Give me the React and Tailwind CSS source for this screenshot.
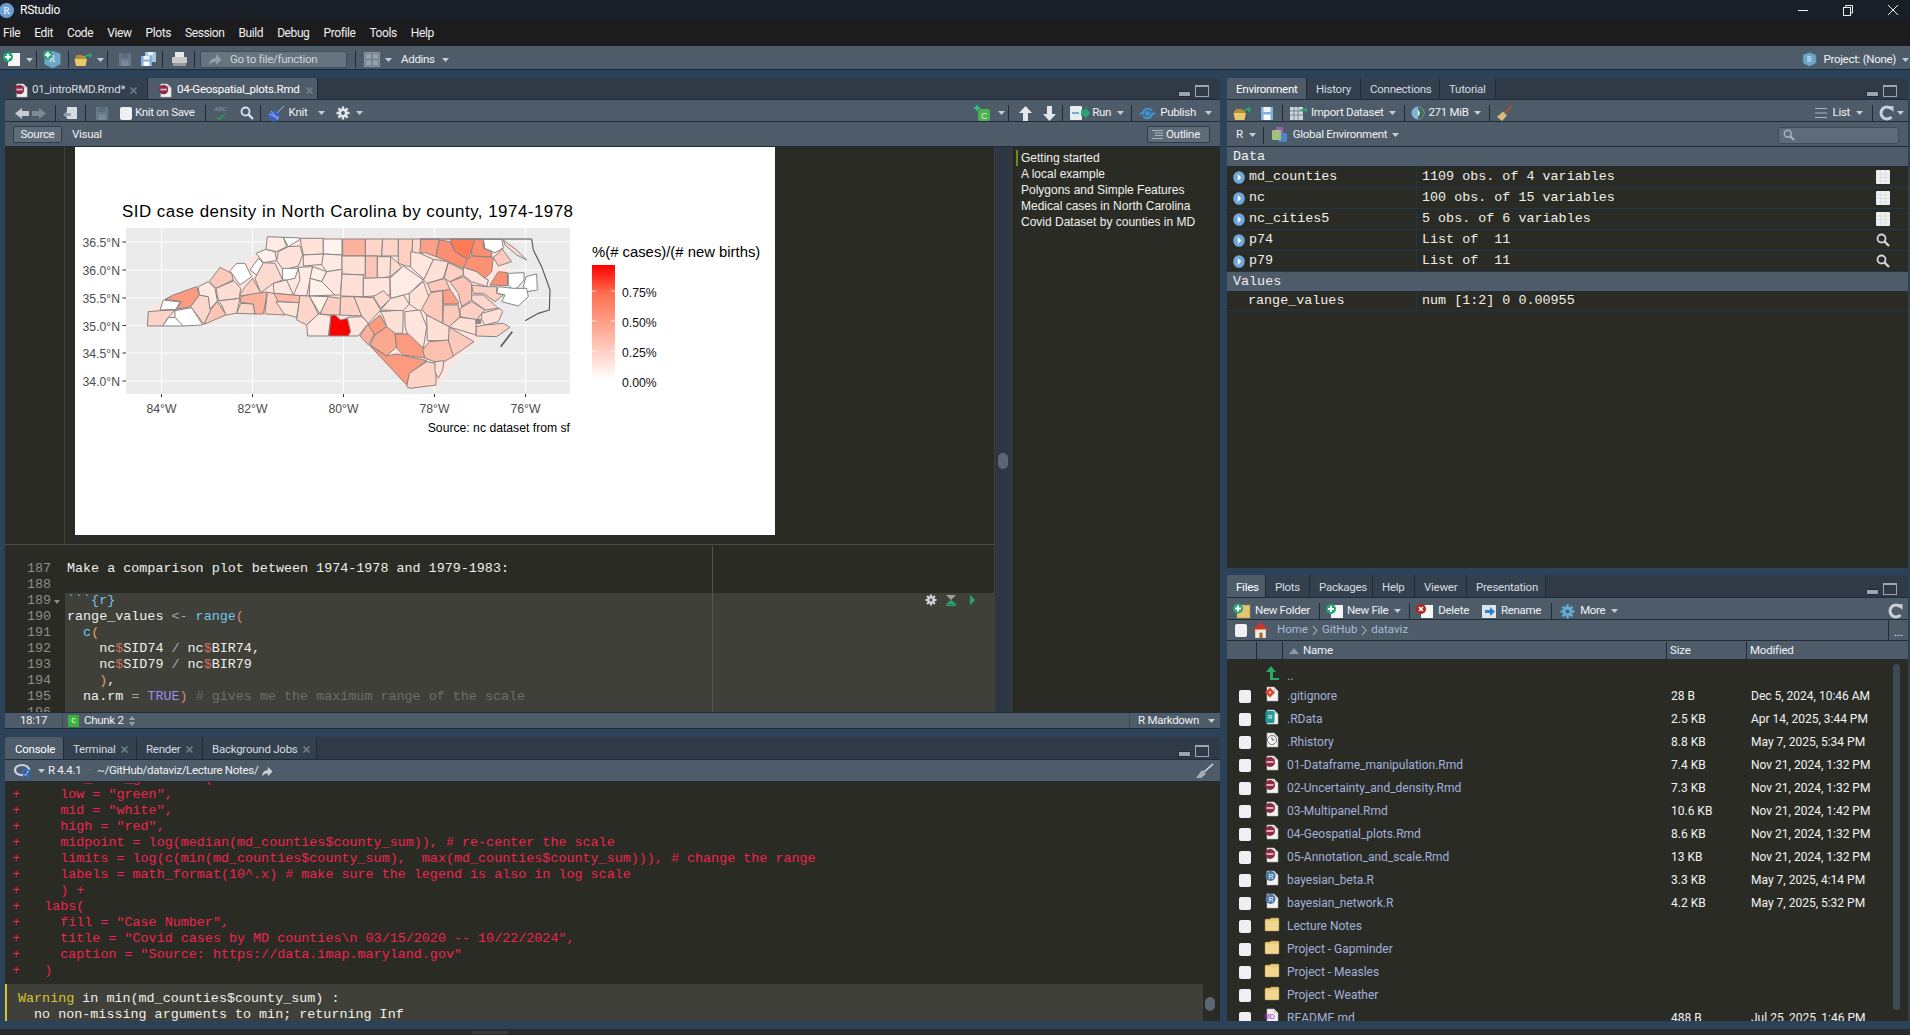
import React from "react";

const Caret = ({ className = "" }) => (
  <svg width="7" height="4" viewBox="0 0 7 4" className={"shrink-0 " + className}><path d="M0 0H7L3.5 4Z" fill="#c5ccd3" /></svg>
);
const Sep = ({ className = "" }) => <div className={"w-px h-[17px] bg-[#1d2a38] shrink-0 " + className} />;

const Doc = ({ children, size = 16 }) => (
  <svg width={size} height={size} viewBox="0 0 16 16" className="shrink-0">
    <path d="M3 1H10L14 5V15H3Z" fill="#f2f2f2" stroke="#b5b5b5" strokeWidth=".6" />
    <path d="M10 1V5H14" fill="#cfcfcf" />
    {children}
  </svg>
);
const RmdDoc = ({ size }) => (
  <Doc size={size}><circle cx="6" cy="7" r="5" fill="#8b2a45" /><rect x="2.5" y="6" width="7" height="2" fill="#d9a9b6" /></Doc>
);
const RDoc = () => (
  <Doc><circle cx="6.5" cy="6" r="5" fill="#4b77a9" /><text x="4.4" y="8.5" fontSize="7" fill="#fff" fontFamily="Liberation Sans">R</text></Doc>
);
const GitDoc = () => (
  <Doc><path d="M6 1.5L11 6.5 6 11.5 1 6.5Z" fill="#d9472b" /><circle cx="6" cy="6.5" r="1" fill="#fff" /></Doc>
);
const DataDoc = () => (
  <Doc><rect x="1.5" y="2" width="9" height="12" rx="1.5" fill="#1f9a94" /><text x="4" y="10" fontSize="6" fill="#fff" fontFamily="Liberation Sans">R</text></Doc>
);
const HistDoc = () => (
  <Doc><circle cx="8" cy="8" r="4.5" fill="#fff" stroke="#777" /><path d="M8 5V8H10.5" stroke="#555" fill="none" /></Doc>
);
const MdDoc = () => (
  <Doc><text x="0" y="11" fontSize="7" fill="#a020c0" fontFamily="Liberation Sans">MD</text></Doc>
);
const Folder = () => (
  <svg width="16" height="15" viewBox="0 0 16 15" className="shrink-0">
    <path d="M1 3Q1 2 2 2H6L7 1H14Q15 1 15 2V13Q15 14 14 14H2Q1 14 1 13Z" fill="#e8c974" stroke="#9c8544" strokeWidth=".5" />
    <rect x="1.5" y="4" width="13" height="9.5" fill="#f0d68e" />
  </svg>
);
const UpArrow = () => (
  <svg width="16" height="16" viewBox="0 0 16 16" className="shrink-0"><path d="M7 1L12 7H9V13H15V15H6V7H2Z" fill="#2aa868" /></svg>
);
const FolderOpen = () => (
  <svg width="19" height="15" viewBox="0 0 19 15" className="shrink-0">
    <path d="M1 6L3 3H8L9 4H12V12H2Z" fill="#b48f3f" />
    <path d="M0.5 7H13L11.5 14H2Z" fill="#ecc968" />
    <path d="M10 5Q12 1.5 15 2.5V0.5L18.5 3.5 15 6.5V4.5Q12.5 4 10 5Z" fill="#2aa868" />
  </svg>
);
const Floppy = ({ dim, blue }) => (
  <svg width="14" height="15" viewBox="0 0 14 15" className="shrink-0">
    <path d="M1 1H13V14H1Z" fill={dim ? "#66788a" : blue ? "#7fb0e0" : "#8296aa"} />
    <rect x="3.5" y="1" width="7" height="5" fill={dim ? "#5a6a7a" : "#eef3f8"} />
    <rect x="3.5" y="8.5" width="7" height="5.5" fill={dim ? "#7a8a98" : "#f7f9fb"} />
  </svg>
);
const SaveAll = () => (
  <svg width="17" height="16" viewBox="0 0 17 16" className="shrink-0">
    <path d="M5 1H16V11H5Z" fill="#a9c5e2" /><rect x="8" y="1" width="5" height="3" fill="#eef3f8" />
    <path d="M1 5H12V15H1Z" fill="#7fb0e0" /><rect x="3.5" y="5" width="6" height="3.5" fill="#eef3f8" /><rect x="3.5" y="10.5" width="6" height="4.5" fill="#fff" />
  </svg>
);
const Printer = () => (
  <svg width="17" height="16" viewBox="0 0 17 16" className="shrink-0">
    <rect x="4" y="1" width="9" height="6" fill="#e8e8e8" /><path d="M1 7Q1 6 2 6H15Q16 6 16 7V12H1Z" fill="#c9c9c9" /><rect x="2" y="12" width="13" height="3" fill="#9a9a9a" />
  </svg>
);
const Cube = ({ size = 16, plus }) => (
  <svg width={size} height={size} viewBox="0 0 16 16" className="shrink-0">
    <path d="M8 .5L15 3V12L8 15.5 1 12V3Z" fill="#6fa6c6" stroke="#3f7391" strokeWidth=".6" />
    <text x="5" y="10.5" fontSize="8" fill="#ddeeff" fontFamily="Liberation Serif">R</text>
    {plus && <g><circle cx="4" cy="4" r="4" fill="#27a572" /><path d="M4 1.7V6.3M1.7 4H6.3" stroke="#fff" strokeWidth="1.6" /></g>}
  </svg>
);
const NewDoc = () => (
  <svg width="18" height="16" viewBox="0 0 18 16" className="shrink-0">
    <path d="M5 2H17V15H5Z" fill="#f5f5f5" /><circle cx="5" cy="6" r="5" fill="#27a572" /><path d="M5 3V9M2 6H8" stroke="#fff" strokeWidth="2" />
  </svg>
);
const NewFolder = () => (
  <svg width="18" height="16" viewBox="0 0 18 16" className="shrink-0">
    <path d="M4 2H17V15H4Z" fill="#e3c46f" stroke="#a88a40" strokeWidth=".5" /><circle cx="5" cy="5.5" r="5" fill="#27a572" /><path d="M5 2.5V8.5M2 5.5H8" stroke="#fff" strokeWidth="2" />
  </svg>
);
const GridIcon = () => (
  <svg width="16" height="15" viewBox="0 0 16 15" className="shrink-0">
    <rect x=".5" y=".5" width="15" height="14" fill="#76838f" stroke="#8a96a1" />
    <rect x="2" y="2" width="5" height="4.5" fill="#97a2ac" /><rect x="9" y="2" width="5" height="4.5" fill="#97a2ac" />
    <rect x="2" y="8.5" width="5" height="4.5" fill="#97a2ac" /><rect x="9" y="8.5" width="5" height="4.5" fill="#97a2ac" />
  </svg>
);
const Gear = ({ size = 14, color = "#e4e7ea" }) => (
  <svg width={size} height={size} viewBox="0 0 14 14" className="shrink-0">
    <g stroke={color} strokeWidth="2.4"><path d="M7 .5V13.5M.5 7H13.5M2.4 2.4L11.6 11.6M11.6 2.4L2.4 11.6" /></g>
    <circle cx="7" cy="7" r="4.4" fill={color} /><circle cx="7" cy="7" r="1.9" fill="#4e5c6a" />
  </svg>
);
const Lens = ({ color = "#cfd6dc", size = 14 }) => (
  <svg width={size} height={size} viewBox="0 0 14 14" className="shrink-0">
    <circle cx="5.5" cy="5.5" r="4" fill="none" stroke={color} strokeWidth="1.8" /><path d="M8.5 8.5L13 13" stroke={color} strokeWidth="2.4" />
  </svg>
);
const Refresh = () => (
  <svg width="15" height="16" viewBox="0 0 15 16" className="shrink-0">
    <path d="M12.5 4A6 6 0 1 0 12.5 12" fill="none" stroke="#c9d0d6" strokeWidth="3" /><path d="M9 1.5L14.5 1V7Z" fill="#c9d0d6" />
  </svg>
);
const MinMax = () => (
  <div className="flex items-end gap-[4px] mr-[11px] mb-[2px]">
    <div className="w-[13px] h-[6px] bg-[#9aa5af] border border-[#1f2a35] rounded-[1px]" />
    <div className="w-[14px] h-[12px] border border-[#9aa5af] border-t-[2px]" />
  </div>
);
const Broom = ({ size = 17 }) => (
  <svg width={size} height={size} viewBox="0 0 17 17" className="shrink-0">
    <path d="M15.5 .5L9 8" stroke="#b5552b" strokeWidth="1.6" /><path d="M7 6.5L11 10.5 6 16 1 12Z" fill="#d8bb77" />
  </svg>
);
const Close = () => (
  <svg width="7" height="7" viewBox="0 0 7 7" className="shrink-0"><path d="M.5 .5L6.500 6.500M6.500 .5L.5 6.500" stroke="#75818d" strokeWidth="1.5" /></svg>
);
const Blue = () => (
  <svg width="12" height="13" viewBox="0 0 12 13" className="shrink-0"><ellipse cx="6" cy="6.500" rx="5.800" ry="6.300" fill="#6fa8dc" /><path d="M4.800 3L8.200 6.500 4.800 10Z" fill="#fff" /></svg>
);
const Chev = () => (
  <svg width="6" height="11" viewBox="0 0 6 11" className="mx-[4px] shrink-0"><path d="M1 1L5 5.500 1 10" fill="none" stroke="#c5ccd3" /></svg>
);

const Tab = ({ w, active, pl = 9, children }) => (
  <div
    className={
      "flex items-center h-full pt-[3px] rounded-t-[2px] border-r border-[#1f2a35] text-[11.5px] tracking-[-0.25px] whitespace-nowrap shrink-0 " +
      (active ? "bg-[#4e5c6a] text-white" : "bg-[#33404d] text-[#d5dbe0]")
    }
    style={{ width: w, paddingLeft: pl }}
  >
    {children}
  </div>
);

const COUNTIES_W = [
  ["#fdd3c7", "52,288 55,245 90,242 135,240 115,262 98,288"],
  ["#fff", "98,288 115,263 135,262 160,285 160,288"],
  ["#fff", "135,262 135,242 185,233 218,285 160,288"],
  ["#fff", "90,240 100,210 150,216 138,238"],
  ["#fc9a80", "105,208 130,195 200,170 208,195 182,230 140,238 155,215"],
  ["#fdd6cb", "182,230 208,195 235,200 243,238 222,283"],
  ["#ffe9e2", "205,170 235,155 255,175 262,212 240,238 235,200 208,195"],
  ["#fdc5b5", "222,283 243,238 262,215 288,255"],
  ["#fddcd2", "265,212 330,205 320,250 288,255 275,225"],
  ["#fdc9ba", "238,155 270,112 305,130 310,150 258,175"],
  ["#fddcd2", "258,175 312,152 332,175 328,205 265,212"],
  ["#fff", "300,122 320,100 345,100 365,140 330,165"],
  ["#fff", "360,120 385,85 400,100 380,135"],
  ["#fdd6cb", "320,250 332,220 370,222 375,252"],
  ["#fdb09a", "332,200 370,190 412,186 400,252 375,252 370,222 332,217"],
  ["#fdd0c3", "330,195 345,170 368,145 392,188 332,198"],
  ["#fff0eb", "378,70 408,58 435,65 440,92 400,98"],
  ["#ffebe4", "408,58 412,20 460,22 470,50 440,65"],
  ["#fff", "460,22 510,24 510,28 475,50"],
  ["#ffe3da", "440,92 445,65 475,50 510,48 518,75 505,108 460,120"],
  ["#fee1d7", "510,25 580,25 580,72 520,75"],
  ["#fff3ef", "580,27 636,27 636,75 580,72"],
  ["#fdb29e", "638,27 706,27 706,78 638,78"],
  ["#fdd4c8", "706,27 758,27 755,78 706,78"],
  ["#fdd4c8", "758,27 805,27 805,78 755,78"],
  ["#fdd0c2", "805,27 848,27 845,110 830,108 805,100"],
  ["#ffd7cb", "848,27 875,27 875,82 845,100"],
  ["#ffe8e1", "520,75 580,72 580,103 520,108"],
  ["#ffe9e3", "580,72 636,75 636,118 590,125 575,105"],
  ["#fee0d6", "636,78 706,78 706,135 636,132"],
  ["#fdc5b5", "706,78 742,78 742,145 706,145"],
  ["#fee0d6", "742,80 782,80 782,140 742,145"],
  ["#fddacf", "782,80 805,100 815,112 780,140"],
  ["#fddacf", "400,98 435,100 458,150 430,160 392,188 375,145"],
  ["#fff", "458,115 505,115 495,145 470,150 458,150"],
  ["#ffeae4", "505,112 548,110 538,160 530,198 490,195 510,150"],
  ["#fff0eb", "548,110 590,125 575,155 540,145"],
  ["#fff0eb", "540,145 575,155 615,195 538,198"],
  ["#ffe5dd", "590,125 636,118 632,195 615,195 575,155"],
  ["#fee0d6", "636,132 700,135 700,200 632,198"],
  ["#ffe5dd", "700,145 780,142 780,195 700,200"],
  ["#ffe7e0", "430,160 470,150 490,195 432,190"],
  ["#fdb9a5", "432,190 510,197 508,218 438,215"],
  ["#fed3c6", "412,187 432,190 465,255 405,252"],
  ["#fee5dc", "438,215 508,218 500,262 462,252"],
  ["#fed5c9", "510,197 538,198 565,252 530,285 500,270"],
  ["#fff0eb", "538,198 595,200 570,252"],
  ["#fdcfc2", "595,200 632,205 630,255 603,255 570,252"],
  ["#fdd2c5", "632,200 672,200 695,258 630,255"],
  ["#fed9cd", "672,200 730,203 752,240 715,280 695,258"],
  ["#fed9cd", "730,200 760,182 782,205 752,235"],
  ["#ffe9e2", "530,285 565,252 603,256 595,318 533,318"],
  ["#ff0000", "603,256 615,255 632,270 652,265 662,305 655,318 597,318"],
  ["#ffe5dd", "652,262 695,260 715,280 685,318 655,318 662,305"],
  ["#fcb09b", "715,280 730,300 732,315 715,345 690,318"],
  ["#fc9a80", "715,285 750,255 770,290 735,315"],
  ["#fee0d6", "750,245 820,240 818,310 790,310 770,290 758,255"],
  ["#ffe3da", "752,240 782,205 820,195 838,222 820,242"],
  ["#ffeae4", "780,145 820,108 880,150 838,190 820,195 782,205"],
  ["#fee2d8", "838,190 880,155 900,210 870,245 838,222"],
  ["#ffe5dd", "825,245 870,240 890,290 880,355 835,320 825,290"],
  ["#fca88f", "735,315 770,290 795,310 800,350 770,378 720,345"],
  ["#fc9a80", "795,312 835,312 880,355 890,385 820,375 800,355"],
  ["#fc9a80", "770,378 800,372 890,392 840,430 830,465 718,345"],
  ["#fed3c6", "830,470 838,430 890,395 918,400 918,465 840,475"],
];
const COUNTIES_E = [
  ["#fc9f86", "152,27 208,27 198,80 165,68 150,70"],
  ["#fc8f72", "208,30 240,35 255,65 295,90 280,115 235,95 198,80"],
  ["#ff7a55", "240,27 315,27 305,60 295,88 255,65"],
  ["#fc8f72", "315,27 340,27 340,55 365,65 365,80 305,78 305,60"],
  ["#fc9272", "292,88 305,78 370,82 365,125 345,145 320,125 280,112"],
  ["#fff", "340,28 395,28 400,55 375,68 345,55"],
  ["#fdcbbd", "370,82 385,70 395,55 425,95 385,108"],
  ["#ffd7cb", "400,30 440,60 470,90 440,75 405,45"],
  ["#ffe3da", "280,112 320,125 345,145 355,150 350,170 320,160 305,155 280,135"],
  ["#fc8f72", "360,165 385,125 412,128 412,167"],
  ["#fff", "415,130 462,128 462,150 445,170 430,180 415,165"],
  ["#fff", "468,140 500,132 502,180 470,185 460,170"],
  ["#fff", "385,170 430,175 470,175 475,200 445,228 395,215 405,195 380,190"],
  ["#fdc5b5", "240,155 280,140 305,160 305,210 275,230 265,190"],
  ["#fdcfc2", "305,165 350,170 380,170 380,190 400,195 375,215 340,190 310,190"],
  ["#fdd6cb", "305,195 340,195 385,235 345,240 305,210"],
  ["#fdd0c3", "270,235 305,215 345,240 335,250 320,270 270,260"],
  ["#fee0d6", "335,250 390,235 398,245 385,275 345,285 335,270"],
  ["#fed3c6", "318,290 345,285 400,280 420,292 380,320 318,318"],
  ["#fee0d6", "270,262 318,268 318,315 235,290"],
  ["#fdc9ba", "220,225 265,225 270,260 238,290 218,280"],
  ["#fc9f86", "218,180 240,178 265,215 265,222 220,222"],
  ["#fdc9ba", "172,160 225,145 240,178 218,182 182,185"],
  ["#fee0d6", "160,150 190,88 235,95 220,145 172,160"],
  ["#fdd0c3", "222,145 235,98 280,120 280,135 240,155"],
  ["#fdc9ba", "155,238 182,188 218,182 218,280 170,255"],
  ["#fee0d6", "170,255 218,280 238,290 238,332 172,332"],
  ["#fdc0ae", "178,335 235,330 252,378 222,395 195,395 165,385 158,360"],
  ["#fdc9ba", "238,292 312,335 250,378 235,330"],
  ["#fee0d6", "195,395 222,392 218,420 205,445 195,425"],
  ["#ffe5dd", "122,65 150,70 190,88 162,148 122,112"],
];

const Map = () => (
  <svg width="700" height="388" viewBox="75 147 700 388" className="block shrink-0" style={{ fontFamily: "'Liberation Sans',sans-serif" }}>
    <defs>
      <linearGradient id="lg" x1="0" y1="0" x2="0" y2="1">
        <stop offset="0" stopColor="#ff0000" />
        <stop offset=".25" stopColor="#ff6f50" />
        <stop offset=".5" stopColor="#fd9f88" />
        <stop offset=".75" stopColor="#ffcfc3" />
        <stop offset="1" stopColor="#ffffff" />
      </linearGradient>
    </defs>
    <rect x="75" y="147" width="700" height="388" fill="#fff" />
    <text x="122" y="217" fontSize="16.9" fill="#000" textLength="451">SID case density in North Carolina by county, 1974-1978</text>
    <rect x="126" y="228" width="444" height="166" fill="#ebebeb" />
    {[161.5, 252.5, 343.5, 434.5, 525.5].map((x) => (
      <g key={x}>
        <line x1={x} x2={x} y1="228" y2="394" stroke="#fff" strokeWidth="1.1" />
        <line x1={x} x2={x} y1="394" y2="397" stroke="#333" strokeWidth="1" />
      </g>
    ))}
    {[242, 270, 298, 325.5, 353, 381].map((y) => (
      <g key={y}>
        <line x1="126" x2="570" y1={y} y2={y} stroke="#fff" strokeWidth="1.1" />
        <line x1="122.5" x2="126" y1={y} y2={y} stroke="#333" strokeWidth="1" />
      </g>
    ))}
    <g transform="translate(130 230) scale(.33333)" stroke="#858585" strokeWidth="3" strokeLinejoin="round">
      <polygon fill="#ffe5dd" stroke="none" points="52,288 55,245 100,210 200,168 238,155 270,112 345,97 378,70 408,58 412,20 1060,27 1120,60 1130,125 1110,165 1090,210 1060,215 1090,235 1120,240 1100,290 1040,335 970,395 925,470 835,475 685,318 533,318 500,262 330,252 220,285" />
      {COUNTIES_W.map(([f, p], i) => <polygon key={i} fill={f} points={p} />)}
    </g>
    <g transform="translate(370 230) scale(.33333)" stroke="#858585" strokeWidth="3" strokeLinejoin="round">
      {COUNTIES_E.map(([f, p], i) => <polygon key={i} fill={f} points={p} />)}
      <polyline fill="none" stroke="#595959" strokeWidth="3.5" points="485,27 490,60 515,110 540,180 538,240 505,250 465,272" />
      <polyline fill="none" stroke="#595959" strokeWidth="5" points="392,350 427,305" />
      <line x1="152" x2="485" y1="27" y2="27" strokeWidth="4.500" />
      <rect x="318" y="268" width="14" height="12" fill="#8a8a8a" />
    </g>
    {[["36.5°N", 242], ["36.0°N", 270], ["35.5°N", 298], ["35.0°N", 326], ["34.5°N", 353], ["34.0°N", 381]].map(([t, y]) => (
      <text key={t} x="120" y={y + 4.5} fontSize="12.2" textAnchor="end" fill="#4d4d4d">{t}</text>
    ))}
    {[["84°W", 161.5], ["82°W", 252.5], ["80°W", 343.5], ["78°W", 434.5], ["76°W", 525.5]].map(([t, x]) => (
      <text key={t} x={x} y="413" fontSize="12.2" textAnchor="middle" fill="#4d4d4d">{t}</text>
    ))}
    <text x="570" y="431.5" fontSize="12.2" textAnchor="end" fill="#000">Source: nc dataset from sf</text>
    <text x="592" y="257" fontSize="14.85" fill="#000">%(# cases)/(# new births)</text>
    <rect x="592" y="265" width="23" height="115" fill="url(#lg)" />
    {[291, 321, 351].map((y) => (
      <g key={y} stroke="#fff" strokeWidth="1" opacity=".8">
        <line x1="592" x2="596.5" y1={y} y2={y} /><line x1="610.5" x2="615" y1={y} y2={y} />
      </g>
    ))}
    {[["0.75%", 292], ["0.50%", 322], ["0.25%", 352], ["0.00%", 382]].map(([t, y]) => (
      <text key={t} x="622" y={y + 4.5} fontSize="12.2" fill="#111">{t}</text>
    ))}
  </svg>
);

const L = ({ c, children }) => <span style={{ color: c }}>{children}</span>;
const CY = "#74c6e6", GR = "#a9aba3", PK = "#e58080", OR = "#dca35a", DL = "#cf6a60";
const CODE = [
  [187, 0, <>Make a comparison plot between 1974-1978 and 1979-1983:</>],
  [188, 0, ""],
  [189, 1, <L c={CY}>{"```{r}"}</L>],
  [190, 1, <>range_values <L c={GR}>&lt;-</L> <L c={CY}>range</L><L c={PK}>(</L></>],
  [191, 1, <>{"  "}<L c={CY}>c</L><L c={OR}>(</L></>],
  [192, 1, <>{"    "}nc<L c={DL}>$</L>SID74 <L c={GR}>/</L> nc<L c={DL}>$</L>BIR74,</>],
  [193, 1, <>{"    "}nc<L c={DL}>$</L>SID79 <L c={GR}>/</L> nc<L c={DL}>$</L>BIR79</>],
  [194, 1, <>{"    "}<L c={OR}>)</L>,</>],
  [195, 1, <>{"  "}na.rm <L c={GR}>=</L> <L c="#9a8cf0">TRUE</L><L c={PK}>)</L> <L c="#6e6f65"># gives me the maximum range of the scale</L></>],
  [196, 1, ""],
];

const CONSOLE = [
  "+   scale_fill_gradient2(",
  '+     low = "green",',
  '+     mid = "white",',
  '+     high = "red",',
  "+     midpoint = log(median(md_counties$county_sum)), # re-center the scale",
  "+     limits = log(c(min(md_counties$county_sum),  max(md_counties$county_sum))), # change the range",
  "+     labels = math_format(10^.x) # make sure the legend is also in log scale",
  "+     ) +",
  "+   labs(",
  '+     fill = "Case Number",',
  '+     title = "Covid cases by MD counties\\n 03/15/2020 -- 10/22/2024",',
  '+     caption = "Source: https://data.imap.maryland.gov"',
  "+   )",
];

const ENV = [
  ["md_counties", "1109 obs. of 4 variables", "t"],
  ["nc", "100 obs. of 15 variables", "t"],
  ["nc_cities5", "5 obs. of 6 variables", "t"],
  ["p74", "List of  11", "s"],
  ["p79", "List of  11", "s"],
];

const FILES = [
  [GitDoc, ".gitignore", "28 B", "Dec 5, 2024, 10:46 AM"],
  [DataDoc, ".RData", "2.5 KB", "Apr 14, 2025, 3:44 PM"],
  [HistDoc, ".Rhistory", "8.8 KB", "May 7, 2025, 5:34 PM"],
  [RmdDoc, "01-Dataframe_manipulation.Rmd", "7.4 KB", "Nov 21, 2024, 1:32 PM"],
  [RmdDoc, "02-Uncertainty_and_density.Rmd", "7.3 KB", "Nov 21, 2024, 1:32 PM"],
  [RmdDoc, "03-Multipanel.Rmd", "10.6 KB", "Nov 21, 2024, 1:42 PM"],
  [RmdDoc, "04-Geospatial_plots.Rmd", "8.6 KB", "Nov 21, 2024, 1:32 PM"],
  [RmdDoc, "05-Annotation_and_scale.Rmd", "13 KB", "Nov 21, 2024, 1:32 PM"],
  [RDoc, "bayesian_beta.R", "3.3 KB", "May 7, 2025, 4:14 PM"],
  [RDoc, "bayesian_network.R", "4.2 KB", "May 7, 2025, 5:32 PM"],
  [Folder, "Lecture Notes", "", ""],
  [Folder, "Project - Gapminder", "", ""],
  [Folder, "Project - Measles", "", ""],
  [Folder, "Project - Weather", "", ""],
  [MdDoc, "README.md", "488 B", "Jul 25, 2025, 1:46 PM"],
];

const CB = ({ className = "" }) => <div className={"w-[12px] h-[13px] bg-[#eef0f1] rounded-[2px] shrink-0 " + className} />;
const BAR = "flex items-center bg-[#4e5c6a] border-b border-[#1d2b3a] shrink-0 text-[11.5px] tracking-[-0.3px] whitespace-nowrap text-[#eef1f3]";
const STRIP = "flex items-stretch justify-between h-[22px] bg-[#2f3a46] border-b border-[#1d2b3a] shrink-0";

export default function App() {
  return (
    <div className="w-[1910px] h-[1035px] overflow-hidden flex flex-col bg-[#2c4259] [font-family:Roboto,sans-serif]">
      {/* title */}
      <div className="h-[20px] bg-[#1a1e27] flex items-center shrink-0 relative">
        <div className="w-[15px] h-[15px] rounded-full bg-[#6a9fd6] ml-[-1px] flex items-center justify-center text-white text-[10px] [font-family:'Liberation_Serif',serif]">R</div>
        <span className="ml-[6px] text-white text-[12px] tracking-[-0.2px]">RStudio</span>
        <div className="ml-auto flex items-center gap-[33px] mr-[11px]">
          <svg width="12" height="12" viewBox="0 0 12 12"><path d="M1 6.5H11" stroke="#eee" /></svg>
          <svg width="12" height="12" viewBox="0 0 12 12" fill="none" stroke="#eee"><rect x="1.5" y="3.5" width="7" height="8" /><path d="M3.5 3V1.5H10.5V9H9" /></svg>
          <svg width="12" height="12" viewBox="0 0 12 12"><path d="M1 1L11 11M11 1L1 11" stroke="#eee" /></svg>
        </div>
      </div>
      {/* menu */}
      <div className="h-[26px] bg-[#1c1c1e] flex items-center pl-[3px] gap-[14px] text-[12px] tracking-[-0.4px] text-[#f0f0f0] shrink-0">
        {["File", "Edit", "Code", "View", "Plots", "Session", "Build", "Debug", "Profile", "Tools", "Help"].map((m) => <span key={m}>{m}</span>)}
      </div>
      {/* main toolbar */}
      <div className="h-[24px] pb-[1px] bg-[#4e5c6a] border-b border-[#1b2a3a] flex items-end text-[11.5px] tracking-[-0.3px] text-[#eef1f3] shrink-0">
        <div className="ml-[3px] self-center mt-[4px]"><NewDoc /></div>
        <Caret className="ml-[5px] self-center mt-[5px]" />
        <Sep className="ml-[3px]" />
        <div className="ml-[6px] self-center mt-[4px]"><Cube plus size={19} /></div>
        <Sep className="ml-[6px]" />
        <div className="ml-[5px] self-center mt-[4px]"><FolderOpen /></div>
        <Caret className="ml-[4px] self-center mt-[5px]" />
        <Sep className="ml-[3px]" />
        <div className="ml-[10px] self-center mt-[4px]"><Floppy dim /></div>
        <div className="ml-[8px] self-center mt-[4px]"><SaveAll /></div>
        <Sep className="ml-[5px]" />
        <div className="ml-[8px] self-center mt-[4px]"><Printer /></div>
        <Sep className="ml-[6px]" />
        <div className="ml-[5px] w-[147px] h-[17px] bg-[#66747f] border border-[#3f4d5a] rounded-[2px] flex items-center pl-[7px] text-[#cdd3d8]">
          <svg width="14" height="13" viewBox="0 0 14 13" className="shrink-0"><path d="M1 12Q2 5 8 5V1L13.5 6.5 8 12V8.5Q4 8.5 1 12Z" fill="#93a0ab" /></svg>
          <span className="ml-[8px]">Go to file/function</span>
        </div>
        <Sep className="ml-[8px]" />
        <div className="ml-[8px] self-center mt-[4px]"><GridIcon /></div>
        <Caret className="ml-[5px] self-center mt-[5px]" />
        <span className="ml-[9px] self-center mt-[5px]">Addins</span>
        <Caret className="ml-[7px] self-center mt-[5px]" />
        <div className="ml-auto flex items-center mr-[1px] self-center mt-[5px]">
          <Cube size={15} />
          <span className="ml-[6px]">Project: (None)</span>
          <Caret className="ml-[6px]" />
        </div>
      </div>
      {/* body */}
      <div className="flex-1 flex pt-[8px] pb-[8px] pl-[5px] min-h-0">
        <div className="w-[1215px] flex flex-col gap-[8px] shrink-0">
          {/* source */}
          <div className="h-[651px] flex flex-col overflow-hidden">
            <div className={STRIP + " rounded-t-[3px]"}>
              <div className="flex items-stretch h-full">
                <Tab w={143}>
                  <RmdDoc size={15} /><span className="ml-[3px]">01_introRMD.Rmd*</span><span className="ml-[5px]"><Close /></span>
                </Tab>
                <Tab w={170} active pl={10}>
                  <RmdDoc size={15} /><span className="ml-[4px]">04-Geospatial_plots.Rmd</span><span className="ml-[6px]"><Close /></span>
                </Tab>
              </div>
              <div className="flex items-end"><MinMax /></div>
            </div>
            <div className={BAR + " h-[22px] pt-[5px]"}>
              <svg width="32" height="13" viewBox="0 0 32 13" className="ml-[10px] shrink-0"><path d="M0 6.5L7 1V4H14V9H7V12Z" fill="#c6ccd2" /><path d="M31 6.5L24 1V4H17V9H24V12Z" fill="#7d8995" /></svg>
              <Sep className="ml-[8px]" />
              <svg width="15" height="14" viewBox="0 0 15 14" className="ml-[7px] shrink-0"><path d="M4 1H14V13H4Z" fill="#d7dce0" /><path d="M0 9L4 5V7H8V10H4V12Z" fill="#8fa0ae" /></svg>
              <Sep className="ml-[7px]" />
              <div className="ml-[9px]"><Floppy dim /></div>
              <CB className="ml-[11px]" />
              <span className="ml-[3px]">Knit on Save</span>
              <Sep className="ml-[10px]" />
              <div className="ml-[6px] w-[18px] flex flex-col items-center leading-none">
                <span className="text-[7px] text-[#8a96a1] [font-family:'Liberation_Serif',serif]">ABC</span>
                <svg width="10" height="7" viewBox="0 0 10 7"><path d="M1 4L3.5 6.5 9 .5" stroke="#2ea043" fill="none" strokeWidth="1.4" /></svg>
              </div>
              <div className="ml-[10px]"><Lens color="#d5e4ef" /></div>
              <Sep className="ml-[6px]" />
              <svg width="19" height="17" viewBox="0 0 19 17" className="ml-[5px] shrink-0"><circle cx="8" cy="11" r="5.5" fill="#3d62c4" /><path d="M3 9L13 13M5 6L12 15M18 1L11 8" stroke="#a5c0f0" strokeWidth=".9" /></svg>
              <span className="ml-[4px]">Knit</span>
              <Caret className="ml-[11px]" />
              <div className="ml-[11px]"><Gear /></div>
              <Caret className="ml-[6px]" />
              <div className="ml-auto flex items-center">
                <svg width="16" height="16" viewBox="0 0 16 16" className="shrink-0"><rect x="4" y="4" width="12" height="12" rx="2" fill="#4caf50" /><text x="7" y="13.5" fontSize="9" fill="#d7f0d8" fontFamily="Liberation Sans">C</text><path d="M3 0V6M0 3H6" stroke="#2ec27e" strokeWidth="1.8" /></svg>
                <Caret className="ml-[8px]" />
                <Sep className="ml-[3px]" />
                <svg width="13" height="15" viewBox="0 0 13 15" className="ml-[10px] shrink-0"><path d="M6.5 0L13 7H9V15H4V7H0Z" fill="#e4e7ea" /></svg>
                <svg width="13" height="15" viewBox="0 0 13 15" className="ml-[11px] shrink-0"><path d="M6.5 15L13 8H9V0H4V8H0Z" fill="#e4e7ea" /></svg>
                <Sep className="ml-[6px]" />
                <svg width="20" height="14" viewBox="0 0 20 14" className="ml-[7px] shrink-0"><rect x="0" y="0" width="12" height="14" rx="1" fill="#e8ecef" /><rect x="2" y="6" width="7" height="2" fill="#7da6d8" /><path d="M11 4H15V1L20 7 15 13V10H11Z" fill="#27a572" /></svg>
                <span className="ml-[2px]">Run</span>
                <Caret className="ml-[6px]" />
                <Sep className="ml-[7px]" />
                <svg width="17" height="15" viewBox="0 0 17 15" className="ml-[7px] shrink-0" fill="none" stroke="#3f95d6" strokeWidth="2"><path d="M1 7.5H5M12 7.5H16" /><path d="M4 7A5 5 0 0 1 13 5" /><path d="M13 8A5 5 0 0 1 4 10" /><circle cx="8.5" cy="7.5" r="1.5" fill="#3f95d6" /></svg>
                <span className="ml-[4px]">Publish</span>
                <Caret className="ml-[9px] mr-[8px]" />
              </div>
            </div>
            <div className={BAR + " h-[25px] pt-[1px]"}>
              <div className="ml-[8px] w-[49px] h-[17px] bg-[#5e6c79] border border-[#2e3c49] rounded-[2px] flex items-center justify-center">Source</div>
              <span className="ml-[10px]">Visual</span>
              <div className="ml-auto mr-[10px] w-[63px] h-[17px] bg-[#5e6c79] border border-[#2e3c49] rounded-[2px] flex items-center pl-[4px] gap-[3px]">
                <svg width="11" height="11" viewBox="0 0 11 11" stroke="#aab4bd"><path d="M0 1.5H11M3 4H11M3 6.5H11M0 9.5H11" /></svg>
                <span>Outline</span>
              </div>
            </div>
            {/* editor */}
            <div className="flex-1 flex min-h-0 bg-[#2a2b25]">
              <div className="w-[989px] shrink-0 relative flex flex-col overflow-hidden">
                <div className="flex h-[398px] shrink-0 border-b border-[#4c4d46]">
                  <div className="w-[60px] shrink-0 border-r border-[#3f4039]" />
                  <div className="pl-[10px]"><Map /></div>
                </div>
                <div className="h-[16px] shrink-0" />
                <div className="[font-family:'Liberation_Mono',monospace] text-[13.4px] leading-[16px] text-[#f0f0ea]">
                  {CODE.map(([n, chunk, c]) => (
                    <div key={n} className="flex h-[16px]">
                      <div className="w-[60px] shrink-0 text-right pr-[14px] text-[#8d8e87] relative">
                        {n}
                        {n === 189 && <svg width="6" height="4" viewBox="0 0 6 4" className="absolute right-[5px] top-[7px]"><path d="M0 0H6L3 4Z" fill="#8d8e87" /></svg>}
                      </div>
                      <div className={"flex-1 pl-[2px] whitespace-pre " + (chunk ? "bg-[#3f403a]" : "")}>{c}</div>
                    </div>
                  ))}
                </div>
                <div className="absolute left-[707px] top-[399px] bottom-0 w-px bg-[#55564f]" />
                <div className="absolute right-[19px] top-[447px] flex items-center">
                  <Gear size={12} color="#d4d6d2" />
                  <svg width="10" height="11" viewBox="0 0 10 11" className="ml-[9px]"><path d="M0 0H10L5 5Z" fill="#9aa19a" /><path d="M5 5L10 9H0Z" fill="#27a572" /><rect y="9.5" width="10" height="1.5" fill="#27a572" /></svg>
                  <svg width="5" height="10" viewBox="0 0 5 10" className="ml-[14px]"><path d="M0 0L5 5 0 10Z" fill="#27a572" /></svg>
                </div>
              </div>
              <div className="w-[18px] shrink-0 bg-[#2b3743] border-x border-[#3f4039] relative">
                <div className="absolute left-[3px] top-[306px] w-[10px] h-[16px] rounded-[5px] bg-[#5a6772]" />
              </div>
              <div className="flex-1 pt-[3px] pl-[4px] [font-family:'Liberation_Sans',sans-serif] text-[12px] leading-[16px] text-[#f2f2ee]">
                {["Getting started", "A local example", "Polygons and Simple Features", "Medical cases in North Carolina", "Covid Dataset by counties in MD"].map((t, i) => (
                  <div key={t} className={"pl-[3px] h-[16px] border-l-[2px] " + (i === 0 ? "border-[#6a8a20]" : "border-transparent")}>{t}</div>
                ))}
              </div>
            </div>
            <div className="h-[17px] shrink-0 bg-[#4e5c6a] border-y border-[#1d2b3a] flex items-center text-[11.5px] tracking-[-0.3px] text-[#eef1f3]">
              <div className="w-[58px] text-center border-r border-[#3a4754] h-full flex items-center justify-center">18:17</div>
              <div className="ml-[5px] w-[11px] h-[12px] bg-[#3bb33b] text-[8px] text-white flex items-center justify-center [font-family:'Liberation_Mono',monospace]">C</div>
              <span className="ml-[5px]">Chunk 2</span>
              <svg width="6" height="10" viewBox="0 0 6 10" className="ml-[5px]"><path d="M0 4H6L3 0ZM0 6H6L3 10Z" fill="#9aa5af" /></svg>
              <div className="ml-auto flex items-center h-full border-l border-[#3a4754] pl-[8px]">
                <span>R Markdown</span>
                <Caret className="ml-[9px] mr-[5px]" />
              </div>
            </div>
          </div>
          {/* console */}
          <div className="h-[284px] flex flex-col overflow-hidden">
            <div className={STRIP + " h-[23px] rounded-t-[3px]"}>
              <div className="flex items-stretch h-full">
                <Tab w={59} active pl={10}>Console</Tab>
                <Tab w={73}>Terminal<span className="ml-[5px]"><Close /></span></Tab>
                <Tab w={66}>Render<span className="ml-[5px]"><Close /></span></Tab>
                <Tab w={114}>Background Jobs<span className="ml-[5px]"><Close /></span></Tab>
              </div>
              <div className="flex items-end"><MinMax /></div>
            </div>
            <div className={BAR + " h-[22px] pt-[1px]"}>
              <svg width="18" height="16" viewBox="0 0 18 16" className="ml-[9px] shrink-0"><ellipse cx="8" cy="7" rx="7" ry="5" fill="none" stroke="#c9d3dc" strokeWidth="2.2" /><text x="8" y="15" fontSize="12" fontWeight="700" fill="#2b6fd6" fontFamily="Liberation Sans">R</text></svg>
              <Caret className="ml-[6px]" />
              <span className="ml-[3px]">R 4.4.1</span>
              <span className="ml-[7px] text-[#7f8a95]">·</span>
              <span className="ml-[6px]">~/GitHub/dataviz/Lecture Notes/</span>
              <svg width="12" height="11" viewBox="0 0 14 13" className="ml-[3px] shrink-0"><path d="M1 12Q2 5 8 5V1L13.5 6.5 8 12V8.5Q4 8.5 1 12Z" fill="#c9d0d6" /></svg>
              <svg width="18" height="16" viewBox="0 0 18 16" className="ml-auto mr-[6px] shrink-0"><path d="M17 1L8 9" stroke="#d5dade" strokeWidth="1.6" /><path d="M6 7L10 11 5 15H0Z" fill="#a7b0b8" /></svg>
            </div>
            <div className="flex-1 bg-[#2a2b25] relative overflow-hidden [font-family:'Liberation_Mono',monospace] text-[13.4px] leading-[16px] flex flex-col min-h-0">
              <div className="flex-1 min-h-0 overflow-hidden pl-[7px] text-[#f0244f] whitespace-pre">
                <div className="mt-[-11px]">
                  {CONSOLE.map((l, i) => <div key={i} className="h-[16px]">{l}</div>)}
                </div>
              </div>
              <div className="h-[37px] shrink-0 bg-[#3f403a] border-l-[2px] border-[#d8c030] pl-[11px] pt-[7px] text-[#f0f0ea] whitespace-pre w-[1198px]">
                <div><L c="#d8c030">Warning</L> in min(md_counties$county_sum) :</div>
                <div>  no non-missing arguments to min; returning Inf</div>
              </div>
              <div className="absolute right-[5px] bottom-[10px] w-[10px] h-[14px] rounded-[5px] bg-[#5a6772]" />
            </div>
          </div>
        </div>
        {/* right */}
        <div className="w-[681px] ml-[7px] flex flex-col gap-[7px] shrink-0">
          <div className="h-[490px] flex flex-col overflow-hidden">
            <div className={STRIP + " rounded-t-[3px]"}>
              <div className="flex items-stretch h-full">
                <Tab w={80} active>Environment</Tab>
                <Tab w={54}>History</Tab>
                <Tab w={79}>Connections</Tab>
                <Tab w={56}>Tutorial</Tab>
              </div>
              <div className="flex items-end"><MinMax /></div>
            </div>
            <div className={BAR + " h-[22px] pt-[5px]"}>
              <div className="ml-[6px]"><FolderOpen /></div>
              <div className="ml-[8px]"><Floppy blue /></div>
              <Sep className="ml-[8px]" />
              <svg width="18" height="14" viewBox="0 0 18 14" className="ml-[7px] shrink-0"><path d="M0 1H13V14H0Z" fill="#cfd5da" /><path d="M0 5H13M0 9H13M4 1V14M8 1V14" stroke="#7b8792" /><path d="M9 5Q11 2 15 3V1L18 4 15 7V5Q12 4.500 9 5Z" fill="#27a572" /></svg>
              <span className="ml-[3px]">Import Dataset</span>
              <Caret className="ml-[6px]" />
              <Sep className="ml-[8px]" />
              <svg width="14" height="14" viewBox="0 0 14 14" className="ml-[6px] shrink-0"><circle cx="7" cy="7" r="6.5" fill="#7db6d8" /><path d="M7 1A6 6 0 0 1 7 13Z" fill="#3f6d55" /><path d="M7 3L9 7 7 11Z" fill="#f0f0f0" /></svg>
              <span className="ml-[3px]">271 MiB</span>
              <Caret className="ml-[5px]" />
              <Sep className="ml-[8px]" />
              <div className="ml-[6px]"><Broom /></div>
              <div className="ml-auto flex items-center">
                <svg width="12" height="12" viewBox="0 0 12 12" stroke="#aab4bd"><path d="M0 1.500H12M0 6H12M0 10.500H12" /></svg>
                <span className="ml-[6px]">List</span>
                <Caret className="ml-[6px]" />
                <Sep className="ml-[9px]" />
                <div className="ml-[6px]"><Refresh /></div>
                <Caret className="ml-[3px] mr-[4px]" />
              </div>
            </div>
            <div className={BAR + " h-[25px] pt-[2px]"}>
              <span className="ml-[9px]">R</span>
              <Caret className="ml-[6px]" />
              <Sep className="ml-[7px]" />
              <svg width="16" height="16" viewBox="0 0 16 16" className="ml-[8px] shrink-0"><rect x="4" y="0" width="7" height="9" rx="1" fill="#9a5fb5" /><rect x="6" y="6" width="9" height="9" rx="1" fill="#4f86c6" /><rect x="0" y="3" width="9" height="10" rx="1" fill="#a3c07c" /></svg>
              <span className="ml-[5px]">Global Environment</span>
              <Caret className="ml-[5px]" />
              <div className="ml-auto mr-[9px] w-[121px] h-[17px] bg-[#5e6c79] border border-[#3f4d5a] rounded-[3px] flex items-center pl-[4px]"><Lens color="#aab4bd" size={12} /></div>
            </div>
            <div className="flex-1 bg-[#2a2b25] [font-family:'Liberation_Mono',monospace] text-[13.4px] text-[#f0f0ea]">
              <div className="h-[20px] pt-[2px] bg-[#4e5c6a] border-b border-[#1d2b3a] flex items-center pl-[6px]">Data</div>
              {ENV.map(([n, v, k]) => (
                <div key={n} className="h-[21px] flex items-center border-b border-[#22354a]">
                  <div className="w-[190px] h-full shrink-0 pt-[1px] flex items-center pl-[6px] gap-[4px] border-r border-[#22354a]"><Blue /><span>{n}</span></div>
                  <span className="ml-[5px] pt-[1px] whitespace-pre">{v}</span>
                  <div className="ml-auto mr-[18px]">
                    {k === "t" ? <svg width="14" height="14" viewBox="0 0 14 14"><rect width="14" height="14" rx="1" fill="#f0f0f0" /><path d="M0 4H14M0 7.500H14M0 11H14M4.500 0V14M9.500 0V14" stroke="#cdd6df" strokeWidth=".6" /></svg> : <Lens />}
                  </div>
                </div>
              ))}
              <div className="h-[20px] pt-[2px] bg-[#4e5c6a] border-b border-[#1d2b3a] flex items-center pl-[6px]">Values</div>
              <div className="h-[19px] flex items-center border-b border-[#22354a]">
                <div className="w-[190px] h-full shrink-0 pt-[1px] flex items-center pl-[21px] border-r border-[#22354a]">range_values</div>
                <span className="ml-[5px] pt-[1px]">num [1:2] 0 0.00955</span>
              </div>
            </div>
          </div>
          <div className="h-[446px] flex flex-col overflow-hidden">
            <div className={STRIP + " h-[23px] rounded-t-[3px]"}>
              <div className="flex items-stretch h-full">
                <Tab w={39} active>Files</Tab>
                <Tab w={44}>Plots</Tab>
                <Tab w={63}>Packages</Tab>
                <Tab w={42}>Help</Tab>
                <Tab w={52}>Viewer</Tab>
                <Tab w={79}>Presentation</Tab>
              </div>
              <div className="flex items-end"><MinMax /></div>
            </div>
            <div className={BAR + " h-[22px] pt-[5px]"}>
              <div className="ml-[6px]"><NewFolder /></div>
              <span className="ml-[4px]">New Folder</span>
              <Sep className="ml-[9px]" />
              <div className="ml-[6px]"><NewDoc /></div>
              <span className="ml-[3px]">New File</span>
              <Caret className="ml-[6px]" />
              <Sep className="ml-[8px]" />
              <svg width="18" height="16" viewBox="0 0 18 16" className="ml-[6px] shrink-0"><path d="M5 2H17V15H5Z" fill="#f5f5f5" /><circle cx="5" cy="6" r="5" fill="#b3261e" /><path d="M3 4L7 8M7 4L3 8" stroke="#fff" strokeWidth="1.6" /></svg>
              <span className="ml-[4px]">Delete</span>
              <svg width="16" height="15" viewBox="0 0 16 15" className="ml-[12px] shrink-0"><path d="M1 1H15V14H1Z" fill="#dde3e8" /><path d="M4 6H9V3L14 7.500 9 12V9H4Z" fill="#2d7fd6" /></svg>
              <span className="ml-[4px]">Rename</span>
              <Sep className="ml-[10px]" />
              <div className="ml-[8px]"><Gear size={15} color="#5fb0d8" /></div>
              <span className="ml-[5px]">More</span>
              <Caret className="ml-[6px]" />
              <div className="ml-auto mr-[5px]"><Refresh /></div>
            </div>
            <div className="h-[21px] flex items-center bg-[#4e5c6a] border-b border-[#1d2b3a] shrink-0 text-[11.5px] text-[#a9bbd6]">
              <CB className="ml-[8px]" />
              <svg width="17" height="16" viewBox="0 0 16 15" className="ml-[5px] shrink-0"><path d="M8 0L16 8H0Z" fill="#c8392b" /><path d="M3 7H13V15H3Z" fill="#f3ead7" /><rect x="7" y="10" width="3" height="5" fill="#9c6b3c" /></svg>
              <span className="ml-[8px]">Home</span>
              <Chev />
              <span>GitHub</span>
              <Chev />
              <span>dataviz</span>
              <div className="ml-auto w-[20px] h-full border-l border-[#1d2b3a] flex items-end justify-center text-[#eef1f3] leading-[16px]">...</div>
            </div>
            <div className="h-[19px] pt-[1px] flex items-stretch bg-[#4e5c6a] border-b border-[#1d2b3a] shrink-0 text-[11.5px] tracking-[-0.2px] text-[#eef1f3]">
              <div className="w-[30px] border-r border-[#1d2b3a]" />
              <div className="w-[26px] border-r border-[#1d2b3a]" />
              <div className="w-[384px] border-r border-[#1d2b3a] flex items-center pl-[6px]">
                <svg width="10" height="6" viewBox="0 0 10 6"><path d="M0 6H10L5 0Z" fill="#8d98a2" /></svg>
                <span className="ml-[4px]">Name</span>
              </div>
              <div className="w-[80px] border-r border-[#1d2b3a] flex items-center pl-[3px]">Size</div>
              <div className="flex-1 flex items-center pl-[3px]">Modified</div>
            </div>
            <div className="flex-1 min-h-0 bg-[#2a2b25] overflow-hidden relative pt-[1px] text-[12px]">
              <div className="h-[23px] flex items-center pl-[37px]"><UpArrow /><span className="ml-[7px] mt-[6px] text-[#a3b1dc]">..</span></div>
              {FILES.map(([I, n, s, d]) => (
                <div key={n} className="h-[23px] flex items-center">
                  <CB className="ml-[12px] mt-[1px]" />
                  <div className="w-[16px] ml-[13px] shrink-0 mt-[-3px]"><I /></div>
                  <span className="ml-[7px] w-[384px] text-[#a3b1dc] shrink-0">{n}</span>
                  <span className="w-[80px] text-[#f2f3f3] shrink-0">{s}</span>
                  <span className="text-[#f2f3f3]">{d}</span>
                </div>
              ))}
              <div className="absolute right-[8px] top-[4px] bottom-[11px] w-[7px] rounded-[4px] bg-[#3d4a55]" />
            </div>
          </div>
        </div>
      </div>
      <div className="h-[6px] bg-[#2a2a2c] shrink-0 flex justify-center">
        <div className="ml-[-930px] w-[36px] h-[3px] mt-[2px] bg-[#3b3b3d]" />
      </div>
    </div>
  );
}
